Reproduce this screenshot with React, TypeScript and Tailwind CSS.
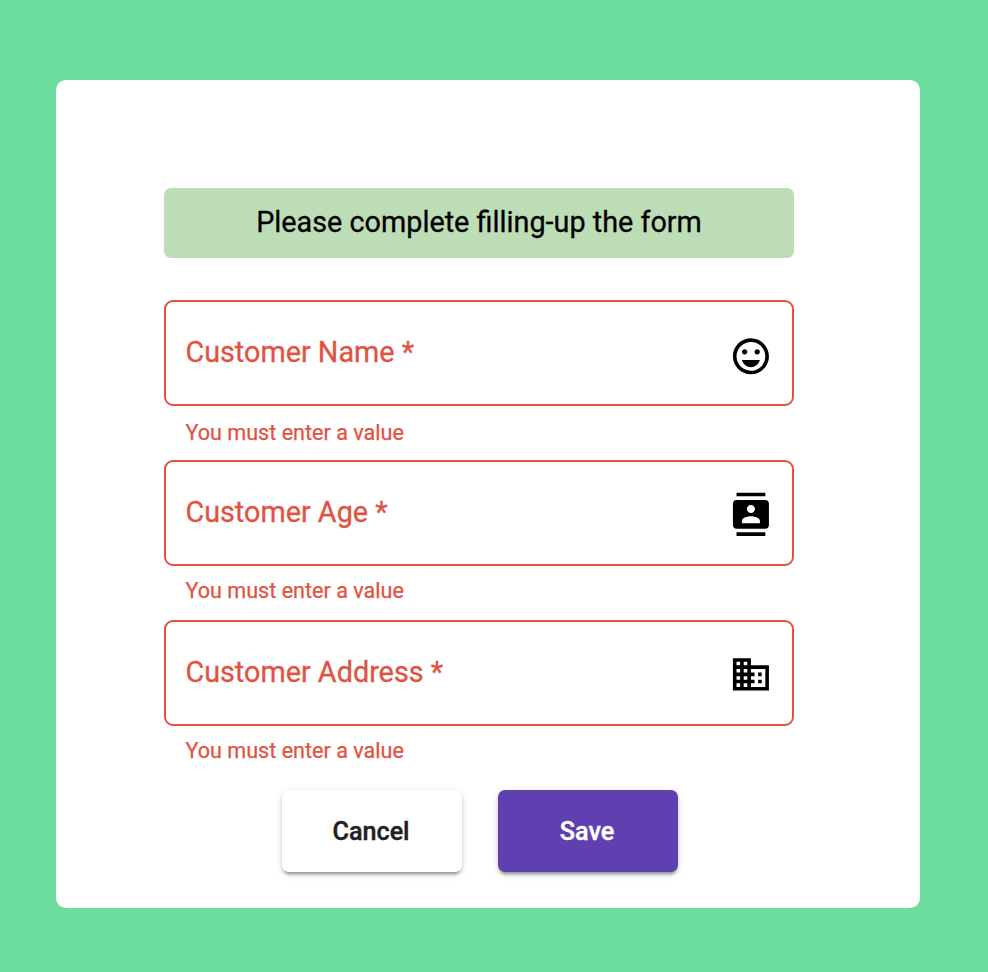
import type { ReactNode } from "react";

const Icon = ({ d }: { d: string }) => (
  <svg viewBox="-0.18 -0.42 24.444 24.444" className="block h-11 w-11 overflow-visible fill-black">
    <path d={d} />
  </svg>
);

const smile =
  "M11.99 2C6.47 2 2 6.48 2 12s4.47 10 9.99 10C17.52 22 22 17.52 22 12S17.52 2 11.99 2zM12 20c-4.42 0-8-3.58-8-8s3.58-8 8-8 8 3.58 8 8-3.58 8-8 8zm3.5-9c.83 0 1.5-.67 1.5-1.5S16.33 8 15.5 8 14 8.67 14 9.5s.67 1.5 1.5 1.5zm-7 0c.83 0 1.5-.67 1.5-1.5S9.33 8 8.5 8 7 8.67 7 9.5 7.67 11 8.5 11zM12 18c2.28 0 4.22-1.66 5-4H7c.78 2.34 2.72 4 5 4z";
const contacts =
  "M20 0H4v2h16V0zM4 24h16v-2H4v2zM20 4H4c-1.1 0-2 .9-2 2v12c0 1.1.9 2 2 2h16c1.1 0 2-.9 2-2V6c0-1.1-.9-2-2-2zm-8 2.75c1.24 0 2.25 1.01 2.25 2.25s-1.01 2.25-2.25 2.25S9.75 10.24 9.75 9 10.76 6.75 12 6.75zM17 17H7v-1.5c0-1.67 3.33-2.5 5-2.5s5 .83 5 2.5V17z";
const building =
  "M12 7V3H2v18h20V7H12zM6 19H4v-2h2v2zm0-4H4v-2h2v2zm0-4H4V9h2v2zm0-4H4V5h2v2zm4 12H8v-2h2v2zm0-4H8v-2h2v2zm0-4H8V9h2v2zm0-4H8V5h2v2zm10 12h-8v-2h2v-2h-2v-2h2v-2h-2V9h8v10zm-2-8h-2v2h2v-2zm0 4h-2v2h2v-2z";

type FieldProps = { label: string; icon: ReactNode; iconClass: string; errorClass: string };

function Field({ label, icon, iconClass, errorClass }: FieldProps) {
  return (
    <div className="h-40">
      <div className="flex h-[106px] items-center justify-between rounded-[9px] border-2 border-[#e05341] pr-[19px] pl-[19.4px]">
        <span className="-mt-0.5 text-[28.8px] leading-9 text-[#e25241] [-webkit-text-stroke:0.3px]">{label}</span>
        <span className={iconClass}>{icon}</span>
      </div>
      <p className={`pl-[21.4px] text-[21.6px] leading-[30px] text-[#e25241] [-webkit-text-stroke:0.25px] ${errorClass}`}>
        You must enter a value
      </p>
    </div>
  );
}

const buttonClass =
  "h-[82px] w-[180px] rounded-[7px] pt-px pr-[2px] shadow-[0_5px_2px_-3px_rgba(0,0,0,0.2),0_3px_3px_rgba(0,0,0,0.16),0_2px_8px_rgba(0,0,0,0.12)] [-webkit-text-stroke:0.4px]";

export default function App() {
  return (
    <main className="h-[972px] w-[988px] bg-[#6cdd9e] pt-20 pl-14 font-[Roboto,sans-serif]">
      <section className="h-[828px] w-[864px] rounded-[10px] bg-white pt-[108px] pl-[108px]">
        <div className="w-[630px]">
          <div className="flex h-[70px] items-center justify-center rounded-[7px] bg-[#bdddb7] text-[28.8px] text-black [-webkit-text-stroke:0.3px]">
            Please complete filling-up the form
          </div>
          <div className="mt-[42px]">
            <Field label="Customer Name *" icon={<Icon d={smile} />} iconClass="mt-1.5" errorClass="pt-3" />
            <Field label="Customer Age *" icon={<Icon d={contacts} />} iconClass="mt-0.5" errorClass="pt-2.5" />
            <Field label="Customer Address *" icon={<Icon d={building} />} iconClass="mt-0.5" errorClass="pt-2.5" />
          </div>
          <div className="mt-[10px] flex gap-9 pl-[118px] text-[25.2px] font-medium">
            <button className={`${buttonClass} bg-white text-[#212121]`}>Cancel</button>
            <button className={`${buttonClass} bg-[#603fb0] text-white`}>Save</button>
          </div>
        </div>
      </section>
    </main>
  );
}
